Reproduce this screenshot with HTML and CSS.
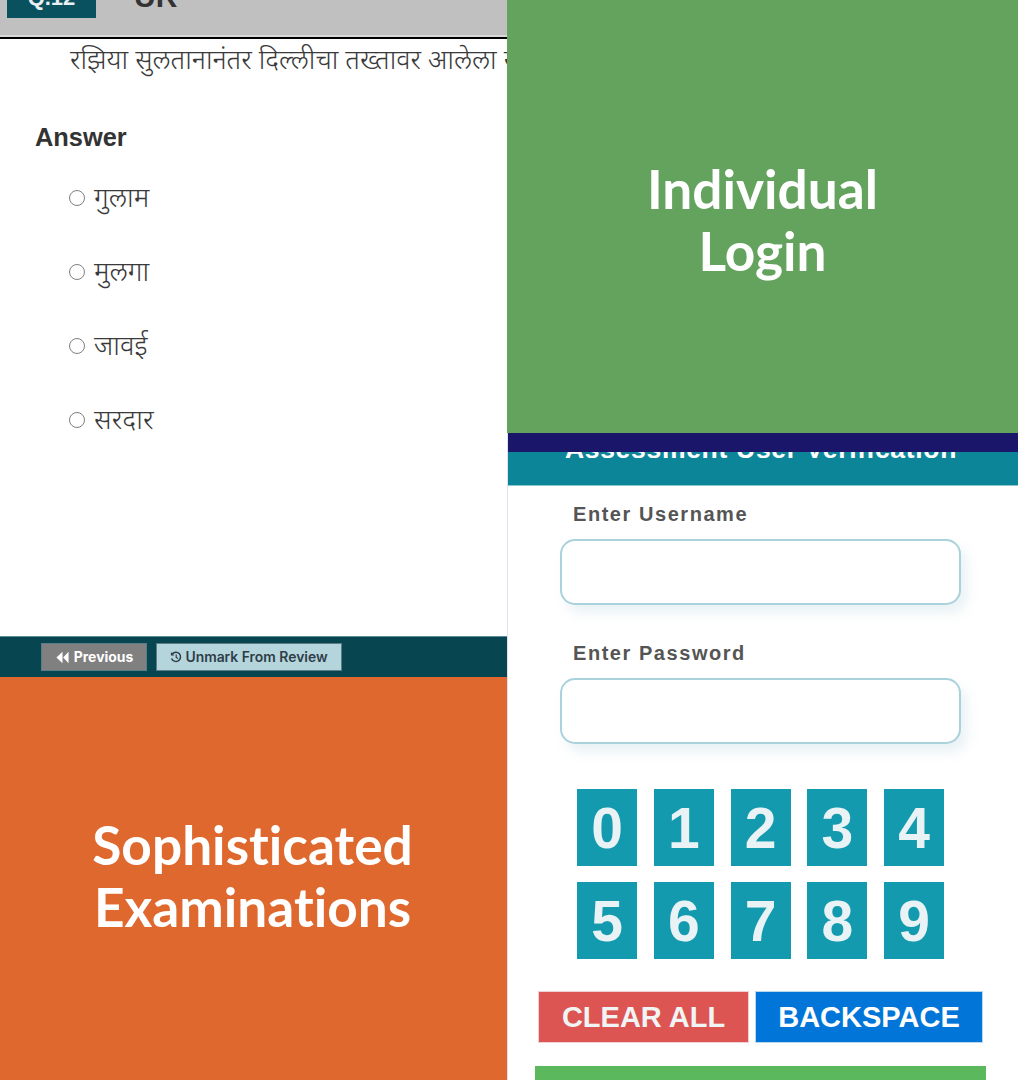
FILE: index.html
```html
<!DOCTYPE html>
<html lang="mr">
<head>
<meta charset="utf-8">
<title>Assessment</title>
<link rel="stylesheet" href="styles.css">
</head>
<body>
<main class="collage">
  <section class="exam">
    <header class="exam-head">
      <span class="q-no">Q.12</span>
      <span class="lang">UR</span>
    </header>
    <div class="exam-body">
      <p class="question">रझिया सुलतानानंतर दिल्लीचा तख्तावर आलेला सुलतान कोण होता</p>
      <h2 class="answer-title">Answer</h2>
      <ul class="options">
        <li class="option"><span class="radio"></span>गुलाम</li>
        <li class="option"><span class="radio"></span>मुलगा</li>
        <li class="option"><span class="radio"></span>जावई</li>
        <li class="option"><span class="radio"></span>सरदार</li>
      </ul>
    </div>
    <footer class="exam-foot">
      <button class="foot-btn prev">
        <svg class="ico" viewBox="0 0 12 12"><path d="M6 .8 .4 6 6 11.2Z M11.6 .8 6.6 6 11.6 11.2Z" fill="currentColor"/></svg>Previous
      </button>
      <button class="foot-btn unmark">
        <svg class="ico" viewBox="0 0 12 12"><path d="M2.3 3A4.6 4.6 0 1 1 1.6 7.4" fill="none" stroke="currentColor" stroke-width="1.5"/><path d="M0.9 1v3.4h3.4Z" fill="currentColor"/><path d="M6.2 3.4v3l1.9 1.2" fill="none" stroke="currentColor" stroke-width="1.2"/></svg>Unmark From Review
      </button>
    </footer>
  </section>

  <section class="banner green"><h1 class="banner-text">Individual<br>Login</h1></section>
  <section class="banner orange"><h1 class="banner-text">Sophisticated<br>Examinations</h1></section>

  <section class="verify">
    <div class="navy"></div>
    <div class="verify-title"><h2>Assessment User Verification</h2></div>
    <form class="verify-form">
      <label class="field-label">Enter Username</label>
      <input class="field" type="text">
      <label class="field-label second">Enter Password</label>
      <input class="field" type="password">
      <div class="keys">
        <span class="key">0</span><span class="key">1</span><span class="key">2</span><span class="key">3</span><span class="key">4</span>
        <span class="key">5</span><span class="key">6</span><span class="key">7</span><span class="key">8</span><span class="key">9</span>
      </div>
      <div class="actions">
        <button type="button" class="act clear">CLEAR ALL</button>
        <button type="button" class="act back">BACKSPACE</button>
      </div>
      <div class="submit"></div>
    </form>
  </section>
</main>
</body>
</html>
```
FILE: styles.css
```css
* { box-sizing: border-box; }
html, body { margin: 0; padding: 0; }
body { width: 1018px; height: 1080px; overflow: hidden; background: #fff; font-family: "Liberation Sans", Arial, sans-serif; }
.collage {
  display: grid;
  grid-template-columns: 507px 511px;
  grid-template-rows: 433px 244px 403px;
  height: 1080px;
}

/* exam panel */
.exam { grid-column: 1; grid-row: 1 / 3; display: flex; flex-direction: column; overflow: hidden; background: #fff; }
.exam-head {
  height: 39px; flex: none; display: flex; align-items: flex-start; overflow: hidden;
  background: #c0c0c0; border-bottom: 2px solid #000; box-shadow: inset 0 -2px 0 #d8d8d8;
  padding-left: 7px;
}
.q-no {
  width: 89px; height: 18px; background: #0a5160; color: #e8f0f2; font-weight: 700; font-size: 22px; flex: none;
  display: flex; align-items: flex-end; justify-content: center; line-height: 16px; overflow: hidden; padding-bottom: 12px;
}
.lang { margin-left: 38px; margin-top: -15px; font-size: 30px; line-height: 24px; font-weight: 700; color: #333; }
.exam-body { flex: 1; min-height: 0; overflow: hidden; padding: 3px 0 0 35px; }
.question { margin: 0 0 0 35px; font-family: "Noto Sans", "Liberation Serif", serif; font-size: 27.1px; font-weight: 300; line-height: 34px; color: #3a3a3a; white-space: nowrap; }
.answer-title { margin: 47px 0 0; font-size: 25.4px; line-height: 28px; font-weight: 700; color: #333; }
.options { list-style: none; margin: 28px 0 0; padding: 0 0 0 34px; display: flex; flex-direction: column; gap: 40px; }
.option { display: flex; align-items: center; gap: 9px; height: 34px; font-family: "Noto Sans", "Liberation Serif", serif; font-size: 27.5px; font-weight: 300; color: #3a3a3a; }
.radio { width: 16px; height: 16px; border-radius: 50%; border: 1.5px solid #808080; background: #fff; flex: none; margin-top: 4px; }
.exam-foot { height: 41px; flex: none; background: #074650; display: flex; align-items: center; gap: 9px; padding: 0 0 0 41px; border-top: 1px solid #5d8e95; }
.foot-btn {
  height: 28px; border: 1px solid #5b7e86; margin: 0; padding: 0; display: flex; align-items: center; justify-content: center;
  font-family: "Inter", "Liberation Sans", sans-serif; font-size: 13.9px; font-weight: 600; white-space: nowrap;
}
.prev { width: 106px; background: #808080; color: #fff; gap: 5px; font-weight: 700; padding-left: 1px; }
.prev .ico { width: 13px; height: 13px; }
.unmark { width: 186px; background: #b5d5dc; color: #2e3d48; gap: 3px; }
.ico { width: 12px; height: 12px; flex: none; }

/* banners */
.banner { display: flex; align-items: center; justify-content: center; text-align: center; }
.banner-text { margin: 0; color: #fff; font-family: "Lato", "Open Sans", sans-serif; font-size: 53.2px; line-height: 62px; font-weight: 700; font-variant-ligatures: none; }
.green { grid-column: 2; grid-row: 1; background: #64a35e; padding: 5px 0 0 0; }
.orange { grid-column: 1; grid-row: 3; background: #df682e; padding: 0 2px 7px 0; }

/* verify panel */
.verify { grid-column: 2; grid-row: 2 / 4; display: flex; flex-direction: column; overflow: hidden; background: #fff; border-left: 1px solid #e0e0ee; }
.navy { height: 19px; flex: none; background: #1a1669; margin-left: -1px; }
.verify-title {
  height: 34px; flex: none; background: #0d8599; border-bottom: 1px solid #8cc4cf; overflow: hidden;
  display: flex; align-items: flex-end; justify-content: center; padding: 0 4px 21px 0;
}
.verify-title h2 { margin: 0; color: #fff; font-size: 26.5px; line-height: 30px; font-weight: 700; white-space: nowrap; flex: none; letter-spacing: .7px; }
.verify-form { flex: 1; min-height: 0; display: flex; flex-direction: column; align-items: flex-start; padding: 16px 0 0 27px; }
.verify-form > * { flex: none; }
.field-label { margin-left: 38px; font-size: 20px; line-height: 24px; font-weight: 700; color: #555; letter-spacing: 1.55px; }
.second { margin-top: 36px; }
.field {
  display: block; width: 401px; height: 66px; margin: 13px 0 0 25px; border: 2px solid #a9d2dc; border-radius: 15px; background: #fff;
  box-shadow: 6px 8px 12px rgba(170, 205, 215, .25); outline: none;
}
.keys { display: grid; grid-template-columns: repeat(5, 60px); grid-auto-rows: 77px; column-gap: 16.75px; row-gap: 16px; margin: 45px 0 0 42px; }
.key { display: flex; align-items: center; justify-content: center; background: #139aae; color: #e9f2f4; font-size: 57px; font-weight: 700; }
.actions { display: flex; gap: 6px; margin: 32px 0 0 3px; }
.act { height: 52px; border: 1px solid #f0d0d0; margin: 0; padding: 0; font-family: "Liberation Sans", sans-serif; font-size: 29px; font-weight: 700; color: #f0f4f4; }
.clear { width: 211px; background: #dc5552; }
.back { width: 228px; background: #0275d8; border-color: #b8d8f0; color: #fff; }
.submit { width: 451px; height: 20px; margin-top: 23px; background: #5cb85c; }
```
